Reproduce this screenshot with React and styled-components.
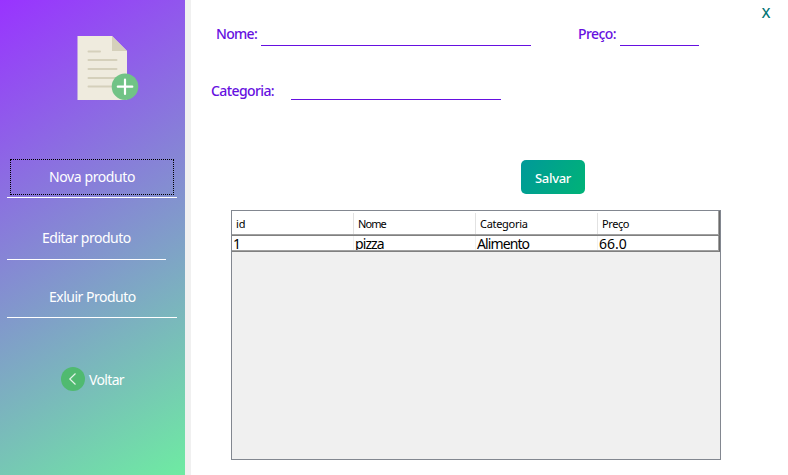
import React from "react";
import styled, { createGlobalStyle } from "styled-components";

const GlobalStyle = createGlobalStyle`
  * { box-sizing: border-box; }
  body { margin: 0; background: #fff; overflow: hidden; }
`;

const Window = styled.div`
  display: flex;
  width: 788px;
  height: 475px;
  background: #fff;
  font-family: "Noto Sans", "Open Sans", sans-serif;
`;

const Sidebar = styled.nav`
  display: flex;
  flex-direction: column;
  width: 191px;
  flex: none;
  border-right: 6px solid #f0f0f0;
  background: linear-gradient(149deg, #9933ff 0%, #6eeba2 100%);
  background-clip: padding-box;
`;

const DocumentIcon = styled.svg`
  flex: none;
  width: 64px;
  height: 66px;
  margin: 35px 0 0 76px;
`;

const MenuButton = styled.button`
  flex: none;
  width: ${(p) => p.$width}px;
  height: 36px;
  margin: ${(p) => p.$top}px 0 0 10px;
  padding: 0 0 0 ${(p) => p.$indent}px;
  border: 0;
  outline: ${(p) => (p.$focused ? "1px dotted #000" : "none")};
  outline-offset: -1px;
  background: none;
  color: #fff;
  font: 14px/36px "Noto Sans", sans-serif;
  letter-spacing: ${(p) => p.$tracking || -0.5}px;
  text-align: left;
  white-space: nowrap;
`;

const Divider = styled.div`
  flex: none;
  width: ${(p) => p.$width}px;
  height: 1px;
  margin: ${(p) => p.$top}px 0 0 7px;
  background: #fff;
`;

const BackButton = styled.button`
  display: flex;
  align-items: center;
  gap: 4px;
  height: 24px;
  margin: 49px 0 0 61px;
  padding: 0;
  border: 0;
  background: none;
  color: #fff;
  font: 14px/24px "Noto Sans", sans-serif;
  letter-spacing: -0.65px;

  span {
    padding-top: 2px;
  }
`;

const Main = styled.main`
  display: flex;
  flex-direction: column;
  width: 597px;
`;

const CloseButton = styled.button`
  align-self: flex-end;
  width: 12px;
  height: 18px;
  margin: 4px 16px 0 0;
  padding: 0;
  border: 0;
  background: none;
  color: #007474;
  font: 500 14px/18px "Noto Sans", sans-serif;
`;

const FieldRow = styled.div`
  display: flex;
  height: 24px;
  margin: ${(p) => p.$top}px 0 0 ${(p) => p.$left}px;
`;

const Label = styled.label`
  width: ${(p) => p.$width}px;
  padding-top: ${(p) => p.$drop || 0}px;
  color: #6610e0;
  font-size: 14px;
  font-weight: 500;
  line-height: 24px;
  letter-spacing: ${(p) => p.$tracking}px;
  white-space: nowrap;
`;

const Field = styled.input`
  width: ${(p) => p.$width}px;
  height: 24px;
  margin-right: ${(p) => p.$after || 0}px;
  padding: 0;
  border: 0;
  border-bottom: 1px solid #6610e0;
  outline: 0;
  background: none;
`;

const SaveButton = styled.button`
  width: 64px;
  height: 34px;
  margin: 60px 0 0 330px;
  padding: 2px 0 0;
  border: 0;
  border-radius: 5px;
  background: linear-gradient(118deg, #009999, #00b377);
  color: #fff;
  font: 500 13px/32px "Noto Sans", sans-serif;
  letter-spacing: -0.3px;
`;

const TablePane = styled.div`
  width: 490px;
  height: 250px;
  margin: 16px 0 0 40px;
  border: 1px solid #828790;
  background: #f0f0f0;
`;

const Row = styled.div`
  display: grid;
  grid-template-columns: 122px 122px 122px 122px;
  height: ${(p) => (p.$header ? 25 : 16)}px;
  border-right: 1px solid #696969;
  border-bottom: 1px solid #808080;
  box-shadow: inset -1px -1px #a0a0a0;
  background: #fff;
  overflow: hidden;
`;

const HeaderCell = styled.div`
  height: 21px;
  margin-top: 2px;
  padding-left: 4px;
  border-right: 1px solid ${(p) => (p.$last ? "transparent" : "#e2e2e2")};
  color: #000;
  font-size: 11px;
  line-height: 22px;
  letter-spacing: ${(p) => p.$tracking || 0}px;
`;

const Cell = styled.div`
  height: 14px;
  padding-left: 1px;
  border-right: 1px solid ${(p) => (p.$last ? "transparent" : "#f0f0f0")};
  color: #000;
  font-size: 14px;
  line-height: 15px;
  letter-spacing: ${(p) => p.$tracking || 0}px;
  overflow: hidden;
`;

export default function App() {
  return (
    <Window>
      <GlobalStyle />
      <Sidebar>
        <DocumentIcon viewBox="0 0 64 66">
          <path d="M1.5 1H36L51 16V65H1.5Z" fill="#efebde" />
          <path d="M36 1L51 16H36Z" fill="#d5d0bb" />
          <path
            d="M12.5 16.5H24M12.5 25H40.5M12.5 34H40.5M12.5 43H40.5M12.5 51.5H38"
            stroke="#d5d0bb"
            strokeWidth="2"
            strokeLinecap="round"
          />
          <circle cx="49" cy="51.7" r="13.3" fill="#71c386" />
          <path
            d="M49 44.5V59M41.8 51.7H56.3"
            stroke="#fff"
            strokeWidth="2.2"
            strokeLinecap="round"
          />
        </DocumentIcon>
        <MenuButton $focused $width={164} $top={58} $indent={39} $tracking={-0.4}>
          Nova produto
        </MenuButton>
        <Divider $width={170} $top={2} />
        <MenuButton $width={160} $top={22} $indent={32}>
          Editar produto
        </MenuButton>
        <Divider $width={159} $top={3} />
        <MenuButton $width={160} $top={19} $indent={39}>
          Exluir Produto
        </MenuButton>
        <Divider $width={170} $top={2} />
        <BackButton>
          <svg width="24" height="24" viewBox="0 0 24 24">
            <circle cx="12" cy="12" r="12" fill="#50ba70" />
            <path d="M14.5 6.5L8.8 12L14.5 17.5" fill="none" stroke="#e4f4e8" strokeWidth="1.2" />
          </svg>
          <span>Voltar</span>
        </BackButton>
      </Sidebar>
      <Main>
        <CloseButton>X</CloseButton>
        <FieldRow $top={0} $left={25}>
          <Label $width={45} $tracking={-0.7}>Nome:</Label>
          <Field $width={270} $after={47} />
          <Label $width={42} $tracking={-0.6}>Preço:</Label>
          <Field $width={79} />
        </FieldRow>
        <FieldRow $top={30} $left={20}>
          <Label $width={80} $tracking={-0.6} $drop={3}>Categoria:</Label>
          <Field $width={210} />
        </FieldRow>
        <SaveButton>Salvar</SaveButton>
        <TablePane>
          <Row $header>
            <HeaderCell>id</HeaderCell>
            <HeaderCell $tracking={-0.9}>Nome</HeaderCell>
            <HeaderCell $tracking={-0.3}>Categoria</HeaderCell>
            <HeaderCell $last $tracking={-0.4}>Preço</HeaderCell>
          </Row>
          <Row>
            <Cell>1</Cell>
            <Cell $tracking={-0.9}>pizza</Cell>
            <Cell $tracking={-0.9}>Alimento</Cell>
            <Cell $last>66.0</Cell>
          </Row>
        </TablePane>
      </Main>
    </Window>
  );
}
